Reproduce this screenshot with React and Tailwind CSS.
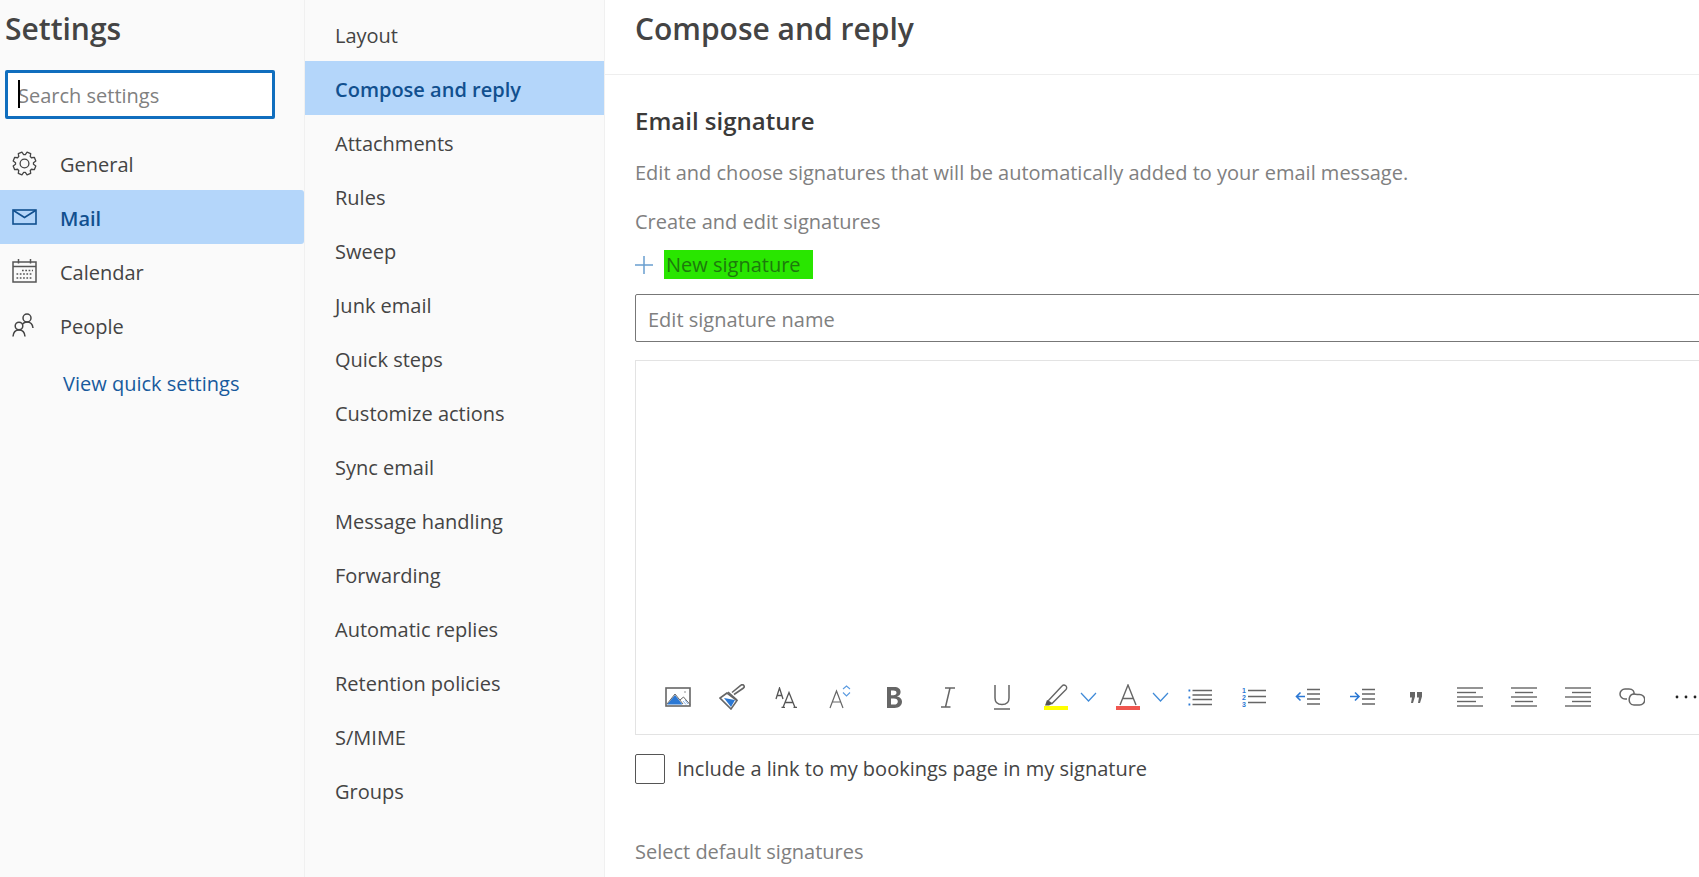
import React from 'react';

const leftItems = [
    { id: 'general', label: 'General' },
    { id: 'mail', label: 'Mail', active: true },
    { id: 'calendar', label: 'Calendar' },
    { id: 'people', label: 'People' },
];

const midItems = [
    'Layout', 'Compose and reply', 'Attachments', 'Rules', 'Sweep', 'Junk email', 'Quick steps',
    'Customize actions', 'Sync email', 'Message handling', 'Forwarding', 'Automatic replies',
    'Retention policies', 'S/MIME', 'Groups',
];

// 8 tooth gear outline
const gearPath = () => {
    const pts = [];
    for (let i = 0; i < 8; i++) {
        const a = (i * Math.PI) / 4 + Math.PI / 8;
        [[-0.3, 9], [-0.17, 11.6], [0.17, 11.6], [0.3, 9]].forEach(([da, r]) => {
            pts.push(`${(12.5 + r * Math.cos(a + da)).toFixed(2)} ${(12.5 + r * Math.sin(a + da)).toFixed(2)}`);
        });
    }
    return `M${pts.join(' L')} Z`;
};

const GearIcon = () => (
    <svg width="25" height="25" viewBox="0 0 25 25" fill="none" stroke="#444" strokeWidth="1.3" strokeLinejoin="round">
        <path d={gearPath()} />
        <circle cx="12.5" cy="12.5" r="4.4" />
    </svg>
);

const MailIcon = () => (
    <svg width="25" height="16" viewBox="0 0 25 16" fill="none" stroke="#11508f" strokeWidth="1.6">
        <rect x="1" y="1" width="23" height="14" />
        <path d="M1.5 1.5 L12.5 8.5 L23.5 1.5" />
    </svg>
);

const CalendarIcon = () => (
    <svg width="25" height="24" viewBox="0 0 25 24" fill="none" stroke="#555" strokeWidth="1.5">
        <rect x="1" y="3" width="23" height="20" />
        <path d="M1 7.5 H24 M6.5 0 V4.5 M18.5 0 V4.5" />
        <path d="M10 11.5h11M4.5 15h16.5M4.5 19h16.5" strokeDasharray="1.7 1.6" strokeWidth="1.7" />
    </svg>
);

const PeopleIcon = () => (
    <svg width="22" height="24" viewBox="0 0 22 24" fill="none" stroke="#444" strokeWidth="1.5">
        <circle cx="15" cy="5" r="4" />
        <circle cx="7" cy="13" r="3.8" />
        <path d="M1 23.5 C1.3 19.5 3.6 17 7 17 C10.4 17 12.7 19.5 13 23.5" />
        <path d="M10.6 11 C11.6 9.8 13 9 15 9 C18.5 9 20.6 11.5 21 15" />
    </svg>
);

const leftIcons = {
    general: <GearIcon />,
    mail: <MailIcon />,
    calendar: <CalendarIcon />,
    people: <PeopleIcon />,
};

const Lines = ({ rows }) => (
    <svg width="26" height="20" viewBox="0 0 26 20" fill="none" stroke="#666" strokeWidth="1.4">
        {rows.map((r, i) => <path key={i} d={`M${r[0]} ${1 + i * 4.5} H${r[1]}`} />)}
    </svg>
);

const toolbar = [
    {
        key: 'image', w: 'w-[54px]', icon: (
            <svg width="26" height="20" viewBox="0 0 26 20" fill="none">
                <rect x="1" y="1" width="24" height="18" stroke="#666" strokeWidth="1.6" />
                <path d="M2 17.5 L10 8 L17.5 17.5 Z" fill="#2b78d4" />
                <path d="M2 17 L10 7 L18 17 M15 13 L18.5 10 L25 17.5" stroke="#666" strokeWidth="1" />
                <path d="M18 14l3 3.5M20 13l3 4" stroke="#8ab4e8" strokeWidth="1" />
                <circle cx="20" cy="5" r="0.7" fill="#666" />
            </svg>
        ),
    },
    {
        key: 'brush', w: 'w-[54px]', icon: (
            <svg width="26" height="26" viewBox="0 0 26 26" fill="none">
                <path d="M8 9 L1 14 L12 25 L18 16.5 Z" stroke="#666" strokeWidth="1.6" fill="#fff" />
                <path d="M5 14 L16 16 L12 23 Z" fill="#2b78d4" />
                <path d="M9 8 L18 16 M15 10.5 L24.5 4 A1.8 1.8 0 0 0 22 1.2 L13 8.5" stroke="#666" strokeWidth="1.6" />
            </svg>
        ),
    },
    {
        key: 'fontsize', w: 'w-[54px]', icon: (
            <svg width="22" height="21" viewBox="0 0 22 21" fill="none" stroke="#555" strokeWidth="1.3">
                <path d="M1 12 L4.5 1 L8 12 M2 8.5 H7" />
                <path d="M8 20.5 L14 5.5 L20 20.5 M10 15.5 H18 M6.5 20.5 H10 M18.5 20.5 H22" />
            </svg>
        ),
    },
    {
        key: 'grow', w: 'w-[54px]', icon: (
            <svg width="22" height="24" viewBox="0 0 22 24" fill="none">
                <path d="M1 23 L7.5 6 L14 23 M3.5 17 H11.5" stroke="#666" strokeWidth="1.2" />
                <path d="M14 4 L17.5 1 L21 4 M14 7.5 L17.5 11 L21 7.5" stroke="#5b9be0" strokeWidth="1.1" />
            </svg>
        ),
    },
    {
        key: 'bold', w: 'w-[54px]', icon: (
            <svg width="16" height="21" viewBox="0 0 16 21" fill="#666">
                <path fillRule="evenodd" d="M1 0 H8 C12.5 0 14.6 2 14.6 5 C14.6 7.3 13.2 8.9 11 9.5 C13.9 10 16 11.8 16 14.6 C16 18.5 13 21 8.5 21 H1 Z M5 3.4 V8.2 H7.3 C9.5 8.2 10.5 7.2 10.5 5.7 C10.5 4.2 9.5 3.4 7.4 3.4 Z M5 11.5 V17.6 H8 C10.5 17.6 11.8 16.4 11.8 14.5 C11.8 12.6 10.4 11.5 7.8 11.5 Z" />
            </svg>
        ),
    },
    {
        key: 'italic', w: 'w-[54px]', icon: (
            <svg width="16" height="21" viewBox="0 0 16 21" fill="none" stroke="#666" strokeWidth="1.5">
                <path d="M5 1 H15 M1 20 H10.5 M10 1 L5.5 20" />
            </svg>
        ),
    },
    {
        key: 'underline', w: 'w-[54px]', icon: (
            <svg width="18" height="25" viewBox="0 0 18 25" fill="none" stroke="#666" strokeWidth="1.5">
                <path d="M2 0 V13 C2 17.5 5 19.5 9 19.5 C13 19.5 16 17.5 16 13 V0 M1 24 H17" />
            </svg>
        ),
    },
    {
        key: 'highlight', w: 'w-[46px] ml-[4px]', icon: (
            <svg width="24" height="26" viewBox="0 0 24 26" fill="none">
                <path d="M4 17 L18 2 A2.5 2.5 0 0 1 22 5.5 L8 19.5 Z" stroke="#666" strokeWidth="1.4" />
                <path d="M3 16 L8 20 L5 21.5 L1 21.5 Z" fill="#555" />
                <rect x="0" y="22" width="24" height="4" fill="#ffff00" />
            </svg>
        ),
    },
    { key: 'chev1', w: 'w-[18px]', chevron: true },
    {
        key: 'color', w: 'w-[54px] ml-[4px]', icon: (
            <svg width="24" height="26" viewBox="0 0 24 26" fill="none">
                <path d="M4 21 L12 1 L20 21 M6.5 14.5 H17.5" stroke="#666" strokeWidth="1.4" />
                <rect x="0" y="22" width="24" height="4" fill="#f0564f" />
            </svg>
        ),
    },
    { key: 'chev2', w: 'w-[10px] mr-[8px]', chevron: true },
    {
        key: 'bullets', w: 'w-[54px]', icon: (
            <svg width="24" height="17" viewBox="0 0 24 17" fill="none">
                <path d="M4.5 1.5 H24 M4.5 6 H24 M4.5 10.5 H24 M4.5 15.5 H24" stroke="#666" strokeWidth="1.5" />
                <path d="M0.5 1.5 H2.3 M0.5 8.5 H2.3 M0.5 15.5 H2.3" stroke="#2b78d4" strokeWidth="1.8" />
            </svg>
        ),
    },
    {
        key: 'numbers', w: 'w-[54px]', icon: (
            <svg width="24" height="20" viewBox="0 0 24 20" fill="none">
                <path d="M6 3.5 H24 M6 9.5 H24 M6 15.5 H24" stroke="#666" strokeWidth="1.5" />
                <text x="0" y="6" fontSize="7" fontWeight="700" fill="#2b78d4" fontFamily="Liberation Sans, sans-serif">1</text>
                <text x="0" y="12.5" fontSize="7" fontWeight="700" fill="#2b78d4" fontFamily="Liberation Sans, sans-serif">2</text>
                <text x="0" y="19.5" fontSize="7" fontWeight="700" fill="#2b78d4" fontFamily="Liberation Sans, sans-serif">3</text>
            </svg>
        ),
    },
    {
        key: 'outdent', w: 'w-[54px]', icon: (
            <svg width="26" height="18" viewBox="0 0 26 18" fill="none">
                <path d="M12 1.5 H25 M12 6 H25 M12 11 H25 M12 16 H25" stroke="#666" strokeWidth="1.5" />
                <path d="M10 8.5 H1.5 M5.5 4.5 L1.5 8.5 L5.5 12.5" stroke="#2b78d4" strokeWidth="1.6" />
            </svg>
        ),
    },
    {
        key: 'indent', w: 'w-[54px]', icon: (
            <svg width="26" height="18" viewBox="0 0 26 18" fill="none">
                <path d="M13 1.5 H26 M13 6 H26 M13 11 H26 M13 16 H26" stroke="#666" strokeWidth="1.5" />
                <path d="M1 8.5 H10 M6 4.5 L10 8.5 L6 12.5" stroke="#2b78d4" strokeWidth="1.6" />
            </svg>
        ),
    },
    {
        key: 'quote', w: 'w-[54px]', icon: (
            <svg width="12" height="11" viewBox="0 0 12 11" fill="#666">
                <path d="M0 0 H5 V4.5 L3 11 H1 L2 5.5 H0 Z M7 0 H12 V4.5 L10 11 H8 L9 5.5 H7 Z" />
            </svg>
        ),
    },
    { key: 'left', w: 'w-[54px]', icon: <Lines rows={[[0, 26], [0, 19], [0, 26], [0, 19], [0, 26]]} /> },
    { key: 'center', w: 'w-[54px]', icon: <Lines rows={[[0, 26], [4, 22], [0, 26], [4, 22], [0, 26]]} /> },
    { key: 'right', w: 'w-[54px]', icon: <Lines rows={[[0, 26], [7, 26], [0, 26], [7, 26], [0, 26]]} /> },
    {
        key: 'link', w: 'w-[54px]', icon: (
            <svg width="26" height="18" viewBox="0 0 26 18" fill="none" stroke="#666" strokeWidth="1.5">
                <path d="M8 11 H6 A5 5 0 0 1 6 1 H10 C14 1 15.5 3.5 15 6.5" />
                <path d="M18 6.5 H20.5 A5.2 5.2 0 0 1 20.5 17 H15 C11 17 9.5 13.5 10.5 9.5 C11.3 7 13 6 15 6 C16 6 17 6.2 18 6.5" />
            </svg>
        ),
    },
    {
        key: 'more', w: 'w-[54px]', icon: (
            <svg width="22" height="4" viewBox="0 0 22 4" fill="#222">
                <circle cx="2" cy="2" r="1.4" /><circle cx="11" cy="2" r="1.4" /><circle cx="20" cy="2" r="1.4" />
            </svg>
        ),
    },
];

const Chevron = () => (
    <svg className="shrink-0" width="17" height="10" viewBox="0 0 17 10" fill="none" stroke="#3f8ad8" strokeWidth="1.2">
        <path d="M1 1 L8.5 9 L16 1" />
    </svg>
);

const App = () => {
    return (
        <div className="h-[877px] w-[1699px] overflow-hidden flex bg-white text-[#444444] font-['Open_Sans',sans-serif]">
            {/* settings categories */}
            <aside className="w-[305px] shrink-0 bg-[#fafafa] border-r border-[#f0f0f0]">
                <h1 className="h-[58px] pl-[5px] pt-[9px] text-[30px] leading-[40px] font-semibold">Settings</h1>
                <div className="mt-[12px] ml-[5px] w-[270px] h-[49px] bg-white border-[3px] border-[#106ebe] rounded-[2px] flex items-center pl-[10px] relative">
                    <span className="absolute left-[10px] top-[7px] w-[2px] h-[28px] bg-black" />
                    <span className="mt-[2px] text-[20px] text-[#808080]">Search settings</span>
                </div>
                <nav className="mt-[17px]">
                    {leftItems.map(item => (
                        <div
                            key={item.id}
                            className={`h-[54px] flex items-center rounded-r-[3px] ${item.active ? 'bg-[#b4d6fa] text-[#11508f] font-semibold' : ''}`}
                        >
                            <span className="w-[60px] pl-[12px] flex items-center">{leftIcons[item.id]}</span>
                            <span className="mt-[4px] text-[20px]">{item.label}</span>
                        </div>
                    ))}
                </nav>
                <div className="mt-[9px] pl-[63px] h-[46px] flex items-center text-[20px] text-[#185a9d]">View quick settings</div>
            </aside>

            {/* compose pages */}
            <nav className="w-[300px] shrink-0 pt-[7px] bg-[#fafafa] border-r border-[#f0f0f0]">
                {midItems.map(label => (
                    <div
                        key={label}
                        className={`h-[54px] pl-[30px] flex items-center text-[20px] ${label === 'Compose and reply' ? 'bg-[#b4d6fa] text-[#11508f] font-semibold' : ''}`}
                    >
                        <span className="mt-[4px]">{label}</span>
                    </div>
                ))}
            </nav>

            <main className="flex-1 min-w-0">
                <div className="h-[75px] pl-[30px] pt-[9px] border-b border-[#eeeeee]">
                    <h2 className="text-[30px] leading-[40px] font-semibold">Compose and reply</h2>
                </div>
                <div className="pl-[30px]">
                    <h3 className="mt-[29px] text-[24px] leading-[34px] font-semibold text-[#3b3a39]">Email signature</h3>
                    <p className="mt-[21px] text-[20px] leading-[28px] text-[#808080]">Edit and choose signatures that will be automatically added to your email message.</p>
                    <p className="mt-[21px] text-[20px] leading-[28px] text-[#808080]">Create and edit signatures</p>
                    <div className="mt-[14px] h-[29px] flex items-center">
                        <svg width="18" height="18" viewBox="0 0 18 18" fill="none" stroke="#6a9fd0" strokeWidth="1.5">
                            <path d="M9 0 V18 M0 9 H18" />
                        </svg>
                        <span className="ml-[11px] w-[149px] h-[29px] pl-[2px] bg-[#29e600] text-[#1d7a0c] text-[20px] leading-[29px]">New signature</span>
                    </div>
                    <div className="mt-[15px] w-[1200px] h-[48px] border border-[#777777] rounded-[2px] flex items-center pl-[12px] pt-[4px] text-[20px] text-[#808080]">Edit signature name</div>
                    <div className="mt-[18px] w-[1200px] h-[375px] border border-[#e3e3e3] flex flex-col justify-end">
                        <div className="h-[72px] pl-[15px] flex items-start pt-[13px]">
                            {toolbar.map(item => (
                                <div key={item.key} className={`h-[44px] shrink-0 flex items-center justify-center overflow-visible ${item.w}`}>
                                    {item.chevron ? <Chevron /> : item.icon}
                                </div>
                            ))}
                        </div>
                    </div>
                    <div className="mt-[19px] h-[30px] flex items-center">
                        <span className="w-[30px] h-[30px] border border-[#555555] rounded-[2px]" />
                        <span className="ml-[12px] text-[20px]">Include a link to my bookings page in my signature</span>
                    </div>
                    <p className="mt-[54px] text-[20px] leading-[28px] text-[#808080]">Select default signatures</p>
                </div>
            </main>
        </div>
    );
};

export default App;
